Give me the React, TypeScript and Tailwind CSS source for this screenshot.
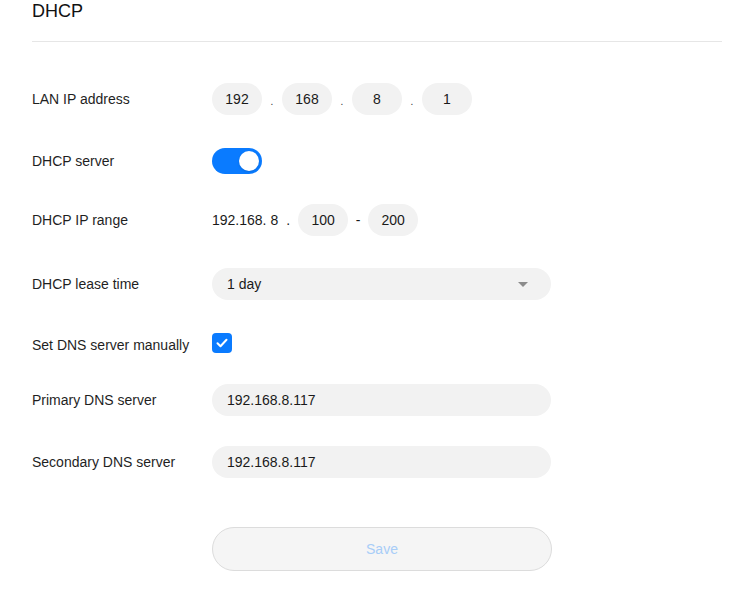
import React from "react"

const font = { fontFamily: '"Liberation Sans", Arial, sans-serif' }

function Pill({ value, className = "w-[50px] justify-center" }: { value: string; className?: string }) {
  return (
    <div className={`flex h-[32px] items-center rounded-full bg-[#f2f2f2] text-[14px] text-[#1a1a1a] ${className}`}>
      {value}
    </div>
  )
}

function Dot() {
  return <span className="w-[20px] text-center text-[10px] leading-none text-[#333] pt-[6px]">.</span>
}

function Row({ label, children, className = "" }: { label: string; children: React.ReactNode; className?: string }) {
  return (
    <div className={`flex h-[32px] items-center ${className}`}>
      <div className="w-[180px] text-[14px] text-[#1f1f1f]">{label}</div>
      <div className="flex items-center">{children}</div>
    </div>
  )
}

export default function App() {
  return (
    <div className="min-h-[597px] bg-white pl-[32px] pr-[7px]" style={font}>
      <h1 className="text-[18px] leading-[22px] text-[#111]">DHCP</h1>
      <div className="mt-[19px] h-px bg-[#e6e6e6]" />

      <Row label="LAN IP address" className="mt-[41px]">
        <Pill value="192" />
        <Dot />
        <Pill value="168" />
        <Dot />
        <Pill value="8" />
        <Dot />
        <Pill value="1" />
      </Row>

      <Row label="DHCP server" className="mt-[30px]">
        <button className="flex h-[26px] w-[50px] items-center justify-end rounded-full bg-[#0a7bff] px-[3px]">
          <span className="h-[20px] w-[20px] rounded-full bg-white shadow-sm" />
        </button>
      </Row>

      <Row label="DHCP IP range" className="mt-[27px]">
        <span className="text-[14px] text-[#1a1a1a]">192.168. 8</span>
        <span className="w-[20px] text-center text-[14px] text-[#1a1a1a]">.</span>
        <Pill value="100" />
        <span className="w-[20px] text-center text-[14px] text-[#1a1a1a]">-</span>
        <Pill value="200" />
      </Row>

      <Row label="DHCP lease time" className="mt-[32px]">
        <div className="flex h-[32px] w-[339px] items-center justify-between rounded-full bg-[#f2f2f2] pl-[15px] pr-[23px] text-[14px] text-[#1a1a1a]">
          <span>1 day</span>
          <svg width="10" height="5" viewBox="0 0 10 5">
            <path d="M0 0h10L5 5z" fill="#8c8c8c" />
          </svg>
        </div>
      </Row>

      <div className="mt-[27px] flex h-[32px] items-center">
        <div className="w-[180px] pt-[4px] text-[14px] text-[#1f1f1f]">Set DNS server manually</div>
        <div className="flex h-[20px] w-[20px] items-center justify-center rounded-[4px] bg-[#0a7bff]">
          <svg width="12" height="10" viewBox="0 0 12 10">
            <path d="M1.5 5.2l3 3 6-6.5" fill="none" stroke="white" strokeWidth="2" strokeLinecap="round" strokeLinejoin="round" />
          </svg>
        </div>
      </div>

      <Row label="Primary DNS server" className="mt-[25px]">
        <Pill value="192.168.8.117" className="w-[339px] pl-[15px]" />
      </Row>

      <Row label="Secondary DNS server" className="mt-[30px]">
        <Pill value="192.168.8.117" className="w-[339px] pl-[15px]" />
      </Row>

      <div className="mt-[49px] pl-[180px]">
        <button className="flex h-[44px] w-[340px] items-center justify-center rounded-full border border-[#dcdcdc] bg-[#f5f5f5] text-[14px] text-[#a8cdf8]">
          Save
        </button>
      </div>
    </div>
  )
}
